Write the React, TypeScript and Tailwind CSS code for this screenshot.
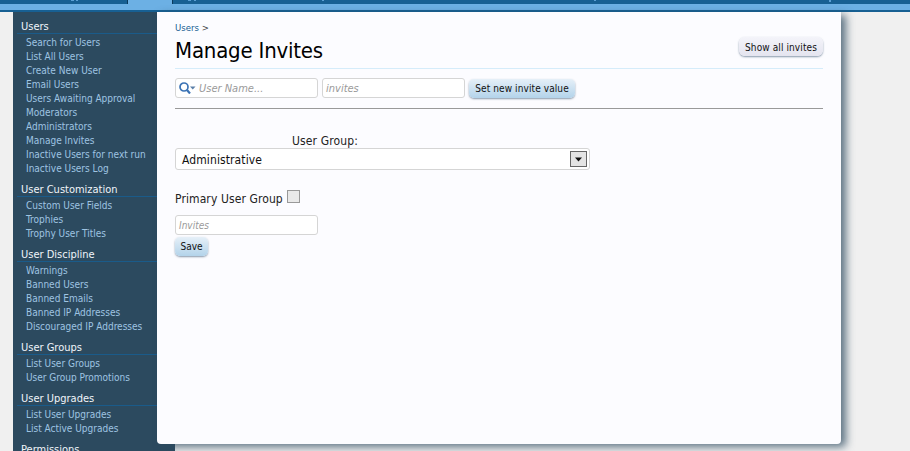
const sections = [
  {
    title: 'Users',
    links: [
      'Search for Users',
      'List All Users',
      'Create New User',
      'Email Users',
      'Users Awaiting Approval',
      'Moderators',
      'Administrators',
      'Manage Invites',
      'Inactive Users for next run',
      'Inactive Users Log',
    ],
  },
  { title: 'User Customization', links: ['Custom User Fields', 'Trophies', 'Trophy User Titles'] },
  {
    title: 'User Discipline',
    links: ['Warnings', 'Banned Users', 'Banned Emails', 'Banned IP Addresses', 'Discouraged IP Addresses'],
  },
  { title: 'User Groups', links: ['List User Groups', 'User Group Promotions'] },
  { title: 'User Upgrades', links: ['List User Upgrades', 'List Active Upgrades'] },
  { title: 'Permissions', links: [] },
];

function SearchIcon() {
  return (
    <svg width="17" height="12" viewBox="0 0 17 12" className="shrink-0">
      <circle cx="5" cy="5" r="4" fill="none" stroke="#3b73b5" strokeWidth="1.7" />
      <path d="M8 8 L11 11.5" stroke="#3b73b5" strokeWidth="2.2" />
      <path d="M11 4.5 H16.5 L13.75 7.5 Z" fill="#5a7fa8" />
    </svg>
  );
}

export default function App() {
  return (
    <div className="h-[451px] w-[910px] overflow-hidden bg-[#f0f0f0] font-['DejaVu_Sans',sans-serif] font-stretch-condensed">
      <div className="relative flex h-[4px] bg-[#176093]">
        <div className="ml-[127px] w-[46px] border-x border-[#0b3a5c] bg-[#6cb0e4]" />
        {/* bottoms of the tab labels, cut off by the top of the window */}
        <span className="absolute top-0 left-[71px] h-[1px] w-[3px] bg-[#5a9fd4]" />
        <span className="absolute top-0 left-[76px] h-[1px] w-[2px] bg-[#5a9fd4]" />
        <span className="absolute top-0 left-[188px] h-[1px] w-[3px] bg-[#5a9fd4]" />
        <span className="absolute top-0 left-[194px] h-[1px] w-[2px] bg-[#5a9fd4]" />
        <span className="absolute top-0 left-[322px] h-[1px] w-[2px] bg-[#5a9fd4]" />
        <span className="absolute top-0 left-[594px] h-[1px] w-[2px] bg-[#5a9fd4]" />
        <span className="absolute top-0 left-[829px] h-[2px] w-[2px] bg-[#5a9fd4]" />
      </div>
      <div className="h-[8px] border-b-2 border-[#176093] bg-[#6cb0e4]" />
      <div className="flex">
        <div className="ml-[13px] flex h-[440px] w-[162px] flex-col bg-[#2c4a5f] pt-[8px]">
          {sections.map((s) => (
            <div key={s.title} className="mb-[7px]">
              <h3 className="ml-[4px] h-[14px] border-b border-[#1a5b8a] pl-[4px] text-[11px] leading-[14px] font-normal text-[#f0f5fa]">
                {s.title}
              </h3>
              <ul className="pt-[2px]">
                {s.links.map((l) => (
                  <li key={l} className="h-[14px] pl-[13px] text-[10px] leading-[14px] text-[#9fc4e2]">
                    {l}
                  </li>
                ))}
              </ul>
            </div>
          ))}
        </div>
        <div className="relative -ml-[18px] h-[432px] w-[684px] rounded-b-[4px] bg-[#fcfcff] px-[18px] pt-[9px] shadow-[5px_3px_8px_rgba(44,74,95,0.75)]">
          <div className="text-[9.5px] leading-[13px] text-[#176093]">
            Users <span className="text-[#444]">&gt;</span>
          </div>
          <div className="flex h-[35px] items-center justify-between border-b border-[#d5ecfa]">
            <h1 className="text-[22px] leading-[30px] tracking-[-0.2px] text-black">Manage Invites</h1>
            <button className="mt-[3px] h-[19px] w-[84px] self-start rounded-[6px] bg-gradient-to-b from-[#f4f4fa] to-[#e4e4ef] pt-[1px] text-[10px] tracking-[0.1px] text-[#111] shadow-[0_1px_2px_rgba(40,70,100,0.55)]">
              Show all invites
            </button>
          </div>
          <div className="mt-[9px] flex h-[30px] items-start gap-[4px]">
            <div className="flex h-[20px] w-[143px] items-center gap-[3px] rounded-[3px] border border-[#d5d5d5] bg-white pl-[3px] text-[11px] leading-[20px] text-[#9a9a9a] italic">
              <SearchIcon /> <span className="pt-[1px]">User Name...</span>
            </div>
            <div className="flex h-[20px] w-[143px] items-center rounded-[3px] border border-[#d5d5d5] bg-white pl-[3px] text-[11px] leading-[20px] text-[#9a9a9a] italic">
              <span className="pt-[1px]">invites</span>
            </div>
            <button className="mt-[1px] h-[19px] w-[106px] rounded-[5px] bg-gradient-to-b from-[#e6f0f8] to-[#b3d3ea] text-[10px] tracking-[0.1px] text-[#111] shadow-[0_1px_2px_rgba(40,70,100,0.55)]">
              Set new invite value
            </button>
          </div>
          <div className="h-[1px] bg-[#999]" />
          <div className="mt-[25px] w-[300px] text-center text-[12px] leading-[14px] tracking-[0.15px] text-[#222]">User Group:</div>
          <div className="relative flex h-[22px] w-[415px] items-center rounded-[3px] border border-[#d5d5d5] bg-white pt-[1px] pl-[6px] text-[12px] tracking-[0.1px] text-[#111]">
            Administrative
            <span className="absolute top-[2px] right-[2px] flex h-[16px] w-[17px] items-center justify-center border border-[#666] bg-[#e4e4e4]">
              <svg width="9" height="5" viewBox="0 0 9 5"><path d="M1 0.5 H8 L4.5 4.5 Z" fill="#111" /></svg>
            </span>
          </div>
          <div className="mt-[20px] flex h-[17px] items-start gap-[4px] text-[12px] leading-[19px] tracking-[0.1px] text-[#222]">
            Primary User Group
            <span className="h-[13px] w-[13px] border border-[#999] bg-[#e9e9e9]" />
          </div>
          <div className="mt-[8px] flex h-[20px] w-[143px] items-center rounded-[3px] border border-[#d5d5d5] bg-white pl-[3px] text-[10px] text-[#9a9a9a] italic">
            Invites
          </div>
          <button className="mt-[2px] block h-[19px] w-[33px] rounded-[5px] bg-gradient-to-b from-[#e6f0f8] to-[#b3d3ea] text-[10px] text-[#111] shadow-[0_1px_2px_rgba(40,70,100,0.55)]">
            Save
          </button>
        </div>
      </div>
    </div>
  );
}
